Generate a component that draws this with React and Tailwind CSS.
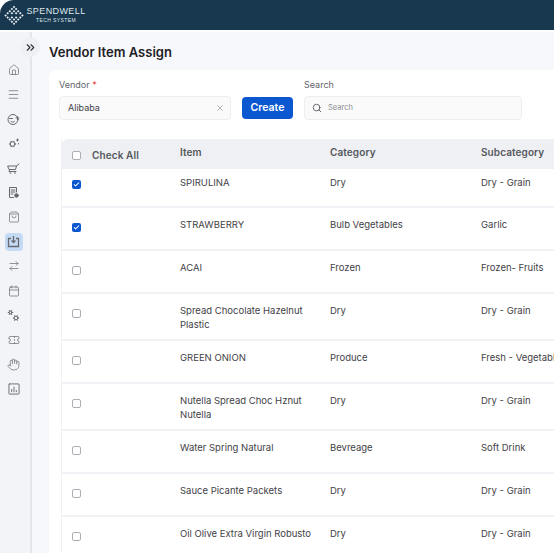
import { Home, Menu, ShoppingBag, ArrowRightLeft, Calendar, Ticket, Hand, ChevronsRight, X, Search, Check } from "lucide-react";

const rows = [
  { item: "SPIRULINA", cat: "Dry", sub: "Dry - Grain", on: true, first: true },
  { item: "STRAWBERRY", cat: "Bulb Vegetables", sub: "Garlic", on: true },
  { item: "ACAI", cat: "Frozen", sub: "Frozen- Fruits" },
  { item: "Spread Chocolate Hazelnut Plastic", cat: "Dry", sub: "Dry - Grain" },
  { item: "GREEN ONION", cat: "Produce", sub: "Fresh - Vegetables" },
  { item: "Nutella Spread Choc Hznut Nutella", cat: "Dry", sub: "Dry - Grain" },
  { item: "Water Spring Natural", cat: "Bevreage", sub: "Soft Drink" },
  { item: "Sauce Picante Packets", cat: "Dry", sub: "Dry - Grain" },
  { item: "Oil Olive Extra Virgin Robusto", cat: "Dry", sub: "Dry - Grain" },
];

function Logo() {
  const dots = [];
  for (let i = 0; i < 5; i++) {
    for (let j = 0; j < 5; j++) {
      if ((i === 1 && j === 3) || (i === 3 && j === 1) || (i === 2 && j === 2)) continue;
      dots.push(<rect key={`${i}-${j}`} x={-0.9} y={-0.9} width="1.8" height="1.8" transform={`translate(${10 + (i - j) * 2.1} ${2 + (i + j) * 2.1}) rotate(45)`} fill="#e8eef2" />);
    }
  }
  return <svg width="20" height="21" viewBox="0 0 20 21">{dots}</svg>;
}

function Box({ on }) {
  return on ? (
    <span className="flex h-[9px] w-[9px] items-center justify-center rounded-[2px] bg-[#0b57d0]">
      <Check size={7} strokeWidth={3.5} className="text-white" />
    </span>
  ) : (
    <span className="block h-[9px] w-[9px] rounded-[2px] border border-[#acafb4] bg-white" />
  );
}

function SideIcon({ children, active }) {
  return (
    <div className={`flex h-[18px] w-[18px] items-center justify-center rounded-[4px] text-[#66696e] ${active ? "bg-[#c5dbf5] text-[#0b62c9]" : ""}`}>
      {children}
    </div>
  );
}

function Draw({ children, size = 13 }) {
  return (
    <svg width={size} height={size} viewBox="0 0 13 13" fill="none" stroke="currentColor" strokeWidth="1" strokeLinecap="round" strokeLinejoin="round">
      {children}
    </svg>
  );
}

// small gear: ring plus short teeth
const gear = (x, y, r) => {
  const teeth = [0, 60, 120, 180, 240, 300].map((a) => {
    const t = (a * Math.PI) / 180;
    return `M${x + Math.cos(t) * r} ${y + Math.sin(t) * r}L${x + Math.cos(t) * (r + 0.8)} ${y + Math.sin(t) * (r + 0.8)}`;
  });
  return (
    <>
      <circle cx={x} cy={y} r={r} />
      <path d={teeth.join("")} />
    </>
  );
};

const sideIcons = [
  <Home size={12} strokeWidth={1.4} />,
  <Menu size={13} strokeWidth={1.3} />,
  <Draw>
    <circle cx="6" cy="6.5" r="5" />
    <path d="M2.5 5.5h3M4 8.5c1 .8 2.4.8 3.4 0" />
    <path d="M9 5h3M10.5 3.5v3" />
  </Draw>,
  <Draw>
    {gear(5.5, 7, 2.4)}
    <path d="M10.5 2v2M9.5 3h2M11.5 6.5v.5" />
  </Draw>,
  <Draw>
    <path d="M1 4h8.5l-1 3.5H2.5zM2.5 7.5L2 9.5h7M9.5 4l2.5-2" />
    <path d="M3 11h1M7.5 11h1" />
  </Draw>,
  <Draw>
    <path d="M9.5 6V1.5h-7v10h4" />
    <path d="M4 4h4M4 6h4M4 8h2" />
    <circle cx="9.5" cy="9.5" r="1.8" fill="currentColor" />
  </Draw>,
  <ShoppingBag size={12} strokeWidth={1.4} />,
  <svg width="13" height="13" viewBox="0 0 13 13" fill="none" stroke="currentColor" strokeWidth="1.3">
    <path d="M4 3.5H1.5v8h10v-8H9M6.5 1v6.5M4.5 5.5l2 2 2-2" />
  </svg>,
  <ArrowRightLeft size={12} strokeWidth={1.4} />,
  <Calendar size={12} strokeWidth={1.4} />,
  <Draw>
    {gear(3.5, 3.5, 1.5)}
    {gear(9, 9, 1.9)}
  </Draw>,
  <Ticket size={12} strokeWidth={1.4} />,
  <Hand size={13} strokeWidth={1.3} />,
  <Draw size={12}>
    <rect x="1" y="1" width="11" height="11" rx="0.5" />
    <path d="M4 9.5V7M6.5 9.5V4.5M9 9.5V8" />
  </Draw>,
];

export default function App() {
  return (
    <div className="relative flex h-[553px] w-[554px] flex-col overflow-hidden bg-white font-['Inter',sans-serif] text-[#3f4247]">
      <header className="flex h-[30px] shrink-0 items-center gap-[3px] rounded-tl-[14px] bg-[#17384f] pl-[4px] text-[#dfe7ec]">
        <Logo />
        <div className="flex w-[58px] flex-col items-center leading-none">
          <span className="font-['Liberation_Sans',sans-serif] text-[9px] tracking-[0.4px]">SPENDWELL</span>
          <span className="mt-[2px] font-['Liberation_Sans',sans-serif] text-[5px] tracking-[0.4px]">TECH SYSTEM</span>
        </div>
      </header>

      <div className="mt-[2px] flex min-h-0 flex-1">
        <aside className="flex w-[32px] shrink-0 flex-col items-center gap-[6.5px] border-r-2 border-[#e3e5ea] bg-[#f3f4f7] pt-[29px] pr-[3px]">
          {sideIcons.map((icon, i) => (
            <SideIcon key={i} active={i === 7}>{icon}</SideIcon>
          ))}
        </aside>

        <main className="flex min-w-0 flex-1 flex-col bg-[#f6f8fc] pl-[17px]">
          <h1 className="mt-[11px] text-[13px] leading-[18px] font-semibold text-[#1e2023]">Vendor Item Assign</h1>
          <section className="mt-[9px] flex-1 rounded-tl-[8px] bg-white pt-[9px] pl-[10px]">
            <div className="flex items-end">
              <div className="w-[172px]">
                <label className="block text-[9px] leading-[12px] text-[#5f6368]">Vendor <span className="text-[#e53935]">*</span></label>
                <div className="mt-[5px] flex h-[24px] items-center justify-between rounded-[4px] border border-[#eceef1] bg-[#fafafa] pr-[5px] pl-[8px] text-[9px] text-[#3f4247]">
                  Alibaba
                  <X size={10} strokeWidth={1.5} className="text-[#8a8d92]" />
                </div>
              </div>
              <button className="mb-[1px] ml-[11px] h-[22px] w-[51px] rounded-[4px] bg-[#0b57d0] text-[10.5px] font-semibold text-white">Create</button>
              <div className="ml-[11px] w-[218px]">
                <label className="block text-[9px] leading-[12px] text-[#5f6368]">Search</label>
                <div className="mt-[5px] flex h-[24px] items-center gap-[6px] rounded-[4px] border border-[#eceef1] bg-[#fafafa] pl-[7px] text-[7.5px] text-[#8a8d92]">
                  <Search size={10} strokeWidth={2} className="text-[#4a4d52]" />
                  Search
                </div>
              </div>
            </div>

            <div className="mt-[19px] ml-[2px] w-[560px] border-l border-[#eef0f3]">
              <div className="-ml-px flex h-[30px] rounded-t-[8px] bg-[#eff0f4] text-[10px] font-semibold tracking-[0.1px] text-[#55585d]">
                <div className="flex w-[119px] items-center pt-[2px] pl-[11px]">
                  <Box />
                  <span className="ml-[11px]">Check All</span>
                </div>
                <div className="w-[150px] pt-[6px]">Item</div>
                <div className="w-[151px] pt-[6px]">Category</div>
                <div className="flex-1 pt-[6px]">Subcategory</div>
              </div>
              {rows.map((r) => (
                <div key={r.item} className={`-ml-px flex border-b-2 border-[#f0f2f5] text-[9.5px] leading-[14px] ${r.first ? "min-h-[39px] pt-[7px]" : "min-h-[43px] pt-[10px] pb-[7px]"}`}>
                  <div className={`w-[119px] pl-[11px] ${r.first ? "pt-[4px]" : "pt-[5px]"}`}><Box on={r.on} /></div>
                  <div className="w-[150px] pr-[8px]">{r.item}</div>
                  <div className="w-[151px]">{r.cat}</div>
                  <div className="flex-1 whitespace-nowrap">{r.sub}</div>
                </div>
              ))}
            </div>
          </section>
        </main>
      </div>

      <button className="absolute top-[37px] left-[20px] flex h-[20px] w-[20px] items-center justify-center rounded-full bg-[#eff0f3] text-[#33363a]">
        <ChevronsRight size={13} strokeWidth={2.2} />
      </button>
    </div>
  );
}
